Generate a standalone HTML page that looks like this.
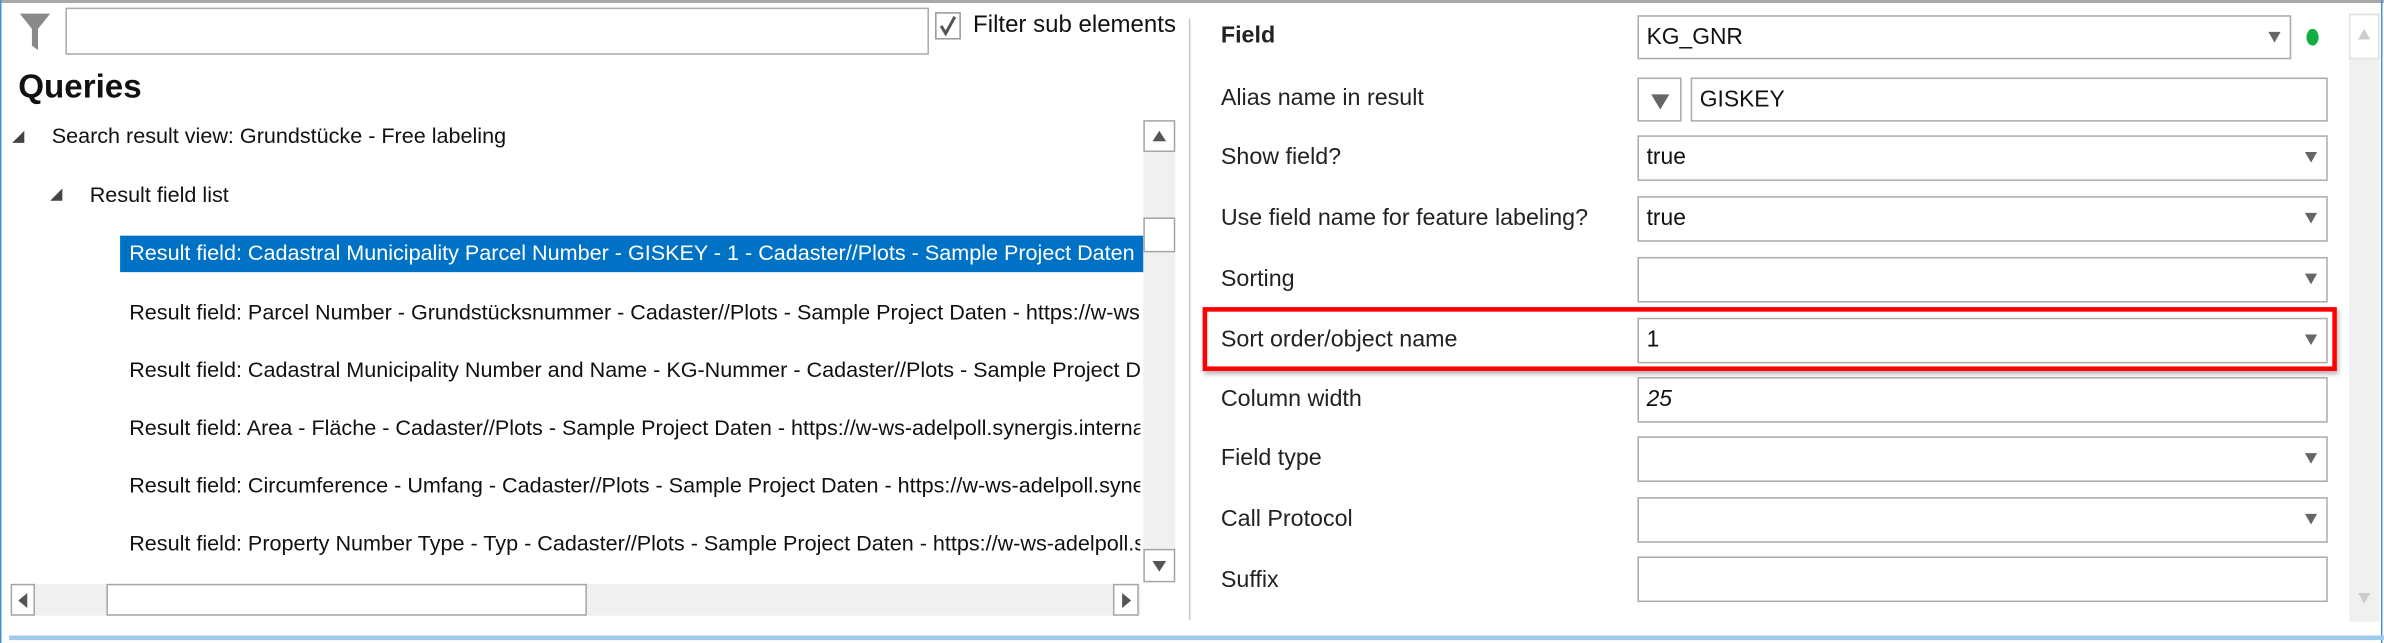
<!DOCTYPE html>
<html><head><meta charset="utf-8"><style>
html,body{margin:0;padding:0;width:2384px;height:643px;overflow:hidden;background:#fff}
#w{position:absolute;left:0;top:0;width:1568px;height:423px;transform:scale(1.5204);transform-origin:0 0;font-family:"Liberation Sans",sans-serif;font-size:14.2px;color:#111}
.a{position:absolute}
.box{position:absolute;border:1px solid #ababab;background:#fff;box-sizing:border-box}
.lbl{position:absolute;left:803px;font-size:15.3px;color:#222}
.dd{position:absolute;right:6px;top:10px;width:0;height:0;border-left:4px solid transparent;border-right:4px solid transparent;border-top:7px solid #666}
.val{position:absolute;left:5px;top:5px;font-size:15px}
.row{position:absolute;left:85px;white-space:nowrap;width:665px;overflow:hidden}
.sb{position:absolute;background:#f0f0f0}
.btn{position:absolute;border:1px solid #a5a5a5;background:#fff;box-sizing:border-box}
</style></head><body><div id="w">
<div class="a" style="left:0;top:0;width:1568px;height:2px;background:#a9a9a9"></div>
<div class="a" style="left:0;top:0;width:1px;height:423px;background:#4a90d9"></div>
<div class="a" style="left:1566px;top:0;width:1px;height:423px;background:#4a90d9"></div>
<div class="a" style="left:6px;top:418px;width:1562px;height:3px;background:#9ccbeb"></div>
<svg class="a" style="left:12px;top:8px" width="22" height="26" viewBox="0 0 22 26"><path d="M1 1H21L13 11V25L9 22V11Z" fill="#8a8a8a"/></svg>
<div class="box" style="left:43px;top:5px;width:568px;height:31px"></div>
<div class="box" style="left:615px;top:8px;width:17px;height:18px;border-color:#999"></div>
<svg class="a" style="left:617px;top:10px" width="13" height="14"><path d="M2 7L5 12L11 1" stroke="#555" stroke-width="2" fill="none"/></svg>
<div class="a" style="left:640px;top:8px;font-size:15.8px">Filter sub elements</div>
<div class="a" style="left:12px;top:44px;font-size:21.8px;font-weight:bold">Queries</div>
<svg class="a" style="left:8px;top:86px" width="9" height="9"><path d="M8 0V8H0Z" fill="#444"/></svg>
<div class="a" style="left:34px;top:82px">Search result view: Grundstücke - Free labeling</div>
<svg class="a" style="left:33px;top:124px" width="9" height="9"><path d="M8 0V8H0Z" fill="#444"/></svg>
<div class="a" style="left:59px;top:121px">Result field list</div>
<div class="a" style="left:79px;top:155px;width:673px;height:24px;background:#0072c6"></div>
<div class="row" style="top:159px;color:#fff">Result field: Cadastral Municipality Parcel Number - GISKEY - 1 - Cadaster//Plots - Sample Project Daten - https</div>
<div class="row" style="top:198px">Result field: Parcel Number - Grundstücksnummer - Cadaster//Plots - Sample Project Daten - https://w-ws-adelpoll</div>
<div class="row" style="top:236px">Result field: Cadastral Municipality Number and Name - KG-Nummer - Cadaster//Plots - Sample Project Daten</div>
<div class="row" style="top:274px">Result field: Area - Fläche - Cadaster//Plots - Sample Project Daten - https://w-ws-adelpoll.synergis.internal</div>
<div class="row" style="top:312px">Result field: Circumference - Umfang - Cadaster//Plots - Sample Project Daten - https://w-ws-adelpoll.synergis</div>
<div class="row" style="top:350px">Result field: Property Number Type - Typ - Cadaster//Plots - Sample Project Daten - https://w-ws-adelpoll.syn</div>
<div class="sb" style="left:752px;top:79px;width:21px;height:304px"></div>
<div class="btn" style="left:752px;top:79px;width:21px;height:21px"></div>
<svg class="a" style="left:758px;top:86px" width="9" height="7"><path d="M4.5 0L9 7H0Z" fill="#555"/></svg>
<div class="btn" style="left:752px;top:143px;width:21px;height:23px"></div>
<div class="btn" style="left:752px;top:361px;width:21px;height:22px"></div>
<svg class="a" style="left:758px;top:369px" width="9" height="7"><path d="M0 0H9L4.5 7Z" fill="#555"/></svg>
<div class="sb" style="left:7px;top:384px;width:743px;height:21px"></div>
<div class="btn" style="left:7px;top:384px;width:16px;height:21px"></div>
<svg class="a" style="left:12px;top:390px" width="6" height="10"><path d="M6 0V10L0 5Z" fill="#555"/></svg>
<div class="btn" style="left:70px;top:384px;width:316px;height:21px"></div>
<div class="btn" style="left:732px;top:384px;width:17px;height:21px"></div>
<svg class="a" style="left:738px;top:390px" width="6" height="10"><path d="M0 0L6 5L0 10Z" fill="#555"/></svg>
<div class="a" style="left:782px;top:12px;width:1px;height:396px;background:#c8c8c8"></div>
<div class="lbl" style="top:15px;font-weight:bold">Field</div>
<div class="box" style="left:1077px;top:10px;width:430px;height:29px"><div class="val">KG_GNR</div><div class="dd"></div></div>
<div class="a" style="left:1517px;top:19px;width:8px;height:11px;border-radius:50%;background:#10b040"></div>
<div class="lbl" style="top:56px">Alias name in result</div>
<div class="box" style="left:1077px;top:51px;width:29px;height:29px"><svg class="a" style="left:8px;top:10px" width="12" height="10"><path d="M0 0H12L6 10Z" fill="#666"/></svg></div>
<div class="box" style="left:1112px;top:51px;width:419px;height:29px"><div class="val">GISKEY</div></div>
<div class="lbl" style="top:95px">Show field?</div>
<div class="box" style="left:1077px;top:89px;width:454px;height:30px"><div class="val">true</div><div class="dd"></div></div>
<div class="lbl" style="top:135px">Use field name for feature labeling?</div>
<div class="box" style="left:1077px;top:129px;width:454px;height:30px"><div class="val">true</div><div class="dd"></div></div>
<div class="lbl" style="top:175px">Sorting</div>
<div class="box" style="left:1077px;top:169px;width:454px;height:30px"><div class="dd"></div></div>
<div class="a" style="left:791px;top:202px;width:740px;height:36px;border:3px solid #f00;box-shadow:1px 2px 3px rgba(0,0,0,.3)"></div>
<div class="lbl" style="top:215px">Sort order/object name</div>
<div class="box" style="left:1077px;top:209px;width:454px;height:30px"><div class="val">1</div><div class="dd"></div></div>
<div class="lbl" style="top:254px">Column width</div>
<div class="box" style="left:1077px;top:248px;width:454px;height:30px"><div class="val" style="font-style:italic">25</div></div>
<div class="lbl" style="top:293px">Field type</div>
<div class="box" style="left:1077px;top:287px;width:454px;height:30px"><div class="dd"></div></div>
<div class="lbl" style="top:333px">Call Protocol</div>
<div class="box" style="left:1077px;top:327px;width:454px;height:30px"><div class="dd"></div></div>
<div class="lbl" style="top:373px">Suffix</div>
<div class="box" style="left:1077px;top:366px;width:454px;height:30px"></div>
<div class="sb" style="left:1545px;top:9px;width:20px;height:400px"></div>
<div class="btn" style="left:1545px;top:9px;width:20px;height:30px;border-color:#e0e0e0"></div>
<svg class="a" style="left:1551px;top:19px" width="8" height="7"><path d="M4 0L8 7H0Z" fill="#ccc"/></svg>
<svg class="a" style="left:1551px;top:390px" width="8" height="7"><path d="M0 0H8L4 7Z" fill="#ccc"/></svg>
</div></body></html>
